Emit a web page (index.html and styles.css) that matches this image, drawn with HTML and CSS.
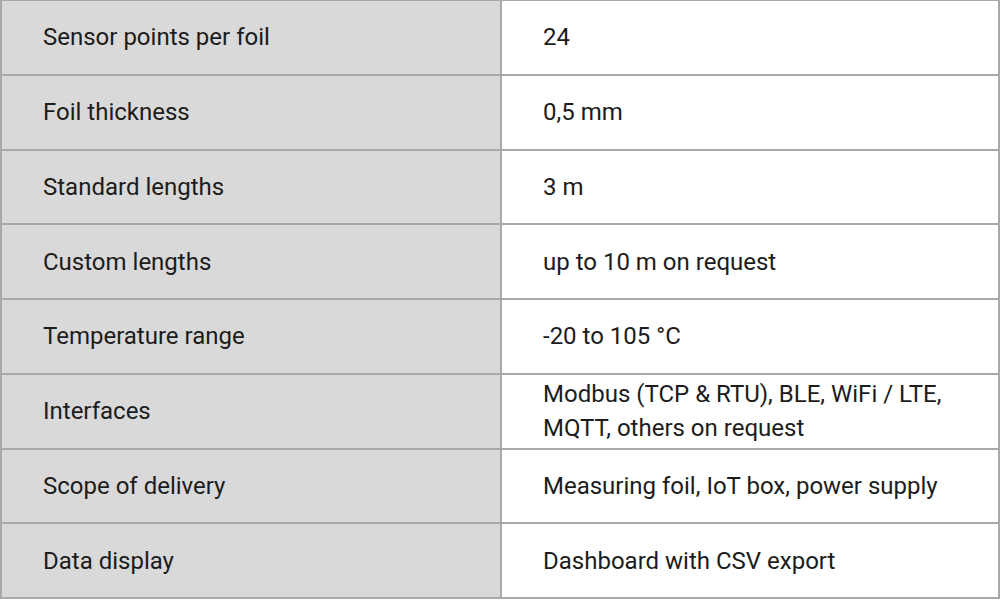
FILE: index.html
```html
<!DOCTYPE html>
<html>
<head>
<meta charset="utf-8">
<link rel="stylesheet" href="styles.css">
</head>
<body>
<table class="spec">
  <tr><td class="key">Sensor points per foil</td><td class="val">24</td></tr>
  <tr><td class="key">Foil thickness</td><td class="val">0,5 mm</td></tr>
  <tr><td class="key">Standard lengths</td><td class="val">3 m</td></tr>
  <tr><td class="key">Custom lengths</td><td class="val">up to 10 m on request</td></tr>
  <tr><td class="key">Temperature range</td><td class="val">-20 to 105 °C</td></tr>
  <tr><td class="key">Interfaces</td><td class="val">Modbus (TCP &amp; RTU), BLE, WiFi / LTE,<br>MQTT, others on request</td></tr>
  <tr><td class="key">Scope of delivery</td><td class="val">Measuring foil, IoT box, power supply</td></tr>
  <tr><td class="key">Data display</td><td class="val">Dashboard with CSV export</td></tr>
</table>
</body>
</html>
```

FILE: styles.css
```css
html, body {
  margin: 0;
  padding: 0;
  background: #ffffff;
}
body {
  font-family: Roboto, "Liberation Sans", sans-serif;
  color: #1c1c1c;
  overflow: hidden;
}
.spec {
  width: 1000px;
  border-collapse: collapse;
  margin-top: -1px;
}
.spec td {
  border: 2px solid #a9a9a9;
  height: 74.75px;
  padding: 0 20px 0 41px;
  font-size: 24px;
  line-height: 34px;
  vertical-align: middle;
  box-sizing: border-box;
}
.spec td.key {
  width: 500px;
  background: #d9d9d9;
}
.spec td.val {
  background: #ffffff;
}
```
